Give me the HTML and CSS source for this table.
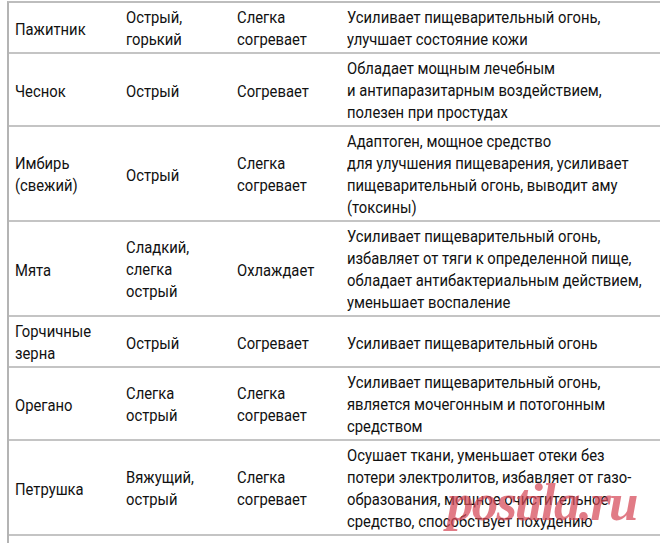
FILE: index.html
```html
<!DOCTYPE html>
<html lang="ru">
<head>
<meta charset="utf-8">
<link rel="stylesheet" href="styles.css">
</head>
<body>
<div class="page">
<table class="herbs">
<tbody>
<tr><td><span class="t">Пажитник</span></td><td><span class="t">Острый,<br>горький</span></td><td><span class="t">Слегка<br>согревает</span></td><td><span class="t">Усиливает пищеварительный огонь,<br>улучшает состояние кожи</span></td></tr>
<tr><td><span class="t">Чеснок</span></td><td><span class="t">Острый</span></td><td><span class="t">Согревает</span></td><td><span class="t">Обладает мощным лечебным<br>и антипаразитарным воздействием,<br>полезен при простудах</span></td></tr>
<tr><td><span class="t">Имбирь<br>(свежий)</span></td><td><span class="t">Острый</span></td><td><span class="t">Слегка<br>согревает</span></td><td><span class="t">Адаптоген, мощное средство<br>для улучшения пищеварения, усиливает<br>пищеварительный огонь, выводит аму<br>(токсины)</span></td></tr>
<tr><td><span class="t">Мята</span></td><td><span class="t">Сладкий,<br>слегка<br>острый</span></td><td><span class="t">Охлаждает</span></td><td><span class="t">Усиливает пищеварительный огонь,<br>избавляет от тяги к определенной пище,<br>обладает антибактериальным действием,<br>уменьшает воспаление</span></td></tr>
<tr><td><span class="t">Горчичные<br>зерна</span></td><td><span class="t">Острый</span></td><td><span class="t">Согревает</span></td><td><span class="t">Усиливает пищеварительный огонь</span></td></tr>
<tr><td><span class="t">Орегано</span></td><td><span class="t">Слегка<br>острый</span></td><td><span class="t">Слегка<br>согревает</span></td><td><span class="t">Усиливает пищеварительный огонь,<br>является мочегонным и потогонным<br>средством</span></td></tr>
<tr><td><span class="t">Петрушка</span></td><td><span class="t">Вяжущий,<br>острый</span></td><td><span class="t">Слегка<br>согревает</span></td><td><span class="t">Осушает ткани, уменьшает отеки без<br>потери электролитов, избавляет от газо-<br>образования, мощное очистительное<br>средство, способствует похудению</span></td></tr>
<tr class="rest"><td></td><td></td><td></td><td></td></tr>
</tbody>
</table>
<div class="watermark">postila.ru</div>
</div>
</body>
</html>
```

FILE: styles.css
```css
html, body {
  margin: 0;
  padding: 0;
  background: #ffffff;
}

.page {
  position: relative;
  width: 660px;
  height: 543px;
  overflow: hidden;
}

.herbs {
  margin: 1px 0 0 7px;
  width: 653px;
  border-collapse: separate;
  border-spacing: 0;
  border-left: 2px solid #b4b4b4;
  border-top: 2px solid #bdbdbd;
  table-layout: fixed;
  font-family: Roboto, "Liberation Sans", sans-serif;
  font-size: 17px;
  line-height: 22px;
  color: #111111;
}

.herbs td {
  padding: 3px 6px 2px 6px;
  vertical-align: middle;
  white-space: nowrap;
  border-bottom: 2px solid #c4c4c4;
}

.herbs .t {
  display: inline-block;
  vertical-align: middle;
  transform: scaleX(0.87);
  transform-origin: left center;
}

.herbs td:nth-child(1),
.herbs td:nth-child(2) {
  width: 99px;
}

.herbs td:nth-child(3) {
  width: 98px;
}

.herbs .rest td {
  border-bottom: none;
  height: 20px;
}

.watermark {
  position: absolute;
  left: 447px;
  top: 476px;
  font-family: "Liberation Serif", serif;
  font-weight: bold;
  font-style: italic;
  font-size: 53px;
  line-height: 53px;
  letter-spacing: -1.8px;
  color: rgba(214, 72, 88, 0.72);
}
```
